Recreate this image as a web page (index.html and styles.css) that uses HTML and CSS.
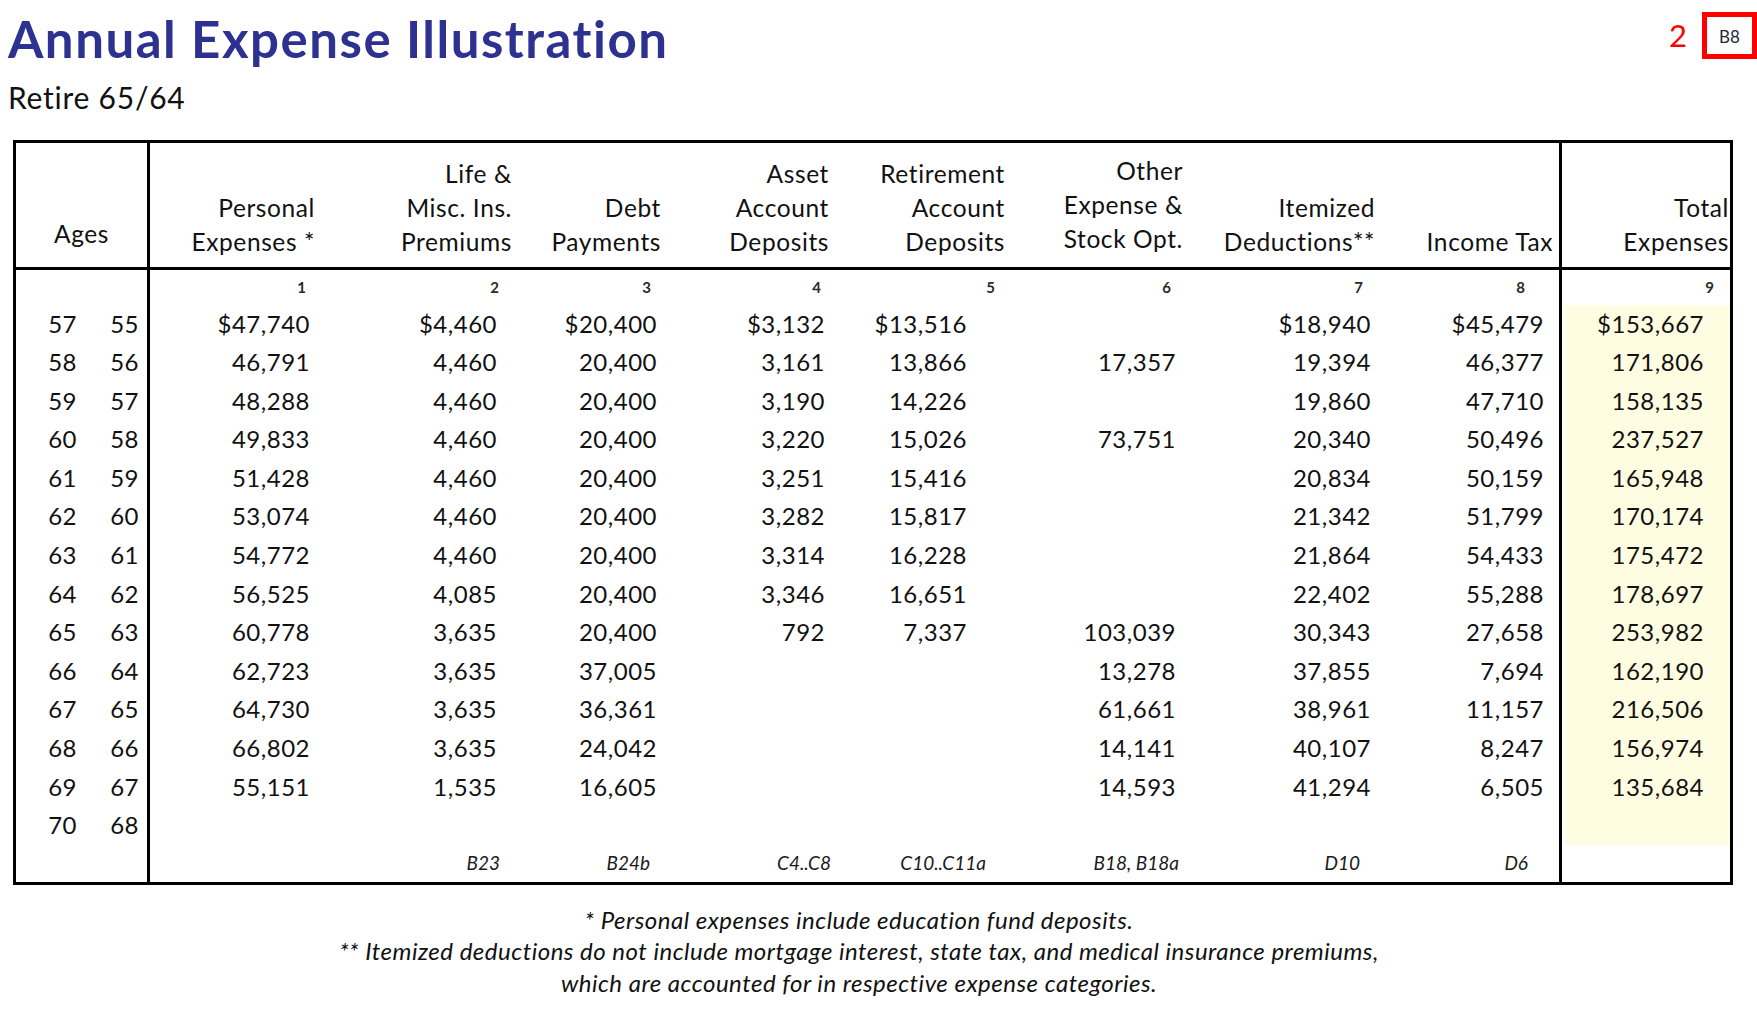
FILE: index.html
```html
<!DOCTYPE html>
<html lang="en">
<head>
<meta charset="utf-8">
<title>Annual Expense Illustration</title>
<link rel="stylesheet" href="styles.css">
</head>
<body>
<div class="top">
  <div class="titles">
    <h1 class="title">Annual Expense Illustration</h1>
    <div class="subtitle">Retire 65/64</div>
  </div>
  <div class="pageref">
    <span class="pagenum">2</span>
    <span class="refbox">B8</span>
  </div>
</div>

<div class="sheet">
  <div class="row hdr">
    <div class="cell ages-h">Ages</div>
    <div class="cell">Personal<br>Expenses *</div>
    <div class="cell">Life &amp;<br>Misc. Ins.<br>Premiums</div>
    <div class="cell">Debt<br>Payments</div>
    <div class="cell">Asset<br>Account<br>Deposits</div>
    <div class="cell">Retirement<br>Account<br>Deposits</div>
    <div class="cell other-h">Other<br>Expense &amp;<br>Stock Opt.</div>
    <div class="cell">Itemized<br>Deductions**</div>
    <div class="cell">Income Tax</div>
    <div class="cell">Total<br>Expenses</div>
  </div>
  <div class="row idx">
    <div class="cell"></div>
    <div class="cell">1</div><div class="cell">2</div><div class="cell">3</div><div class="cell">4</div><div class="cell">5</div><div class="cell">6</div><div class="cell">7</div><div class="cell">8</div><div class="cell">9</div>
  </div>
  <div class="row data">
    <div class="cell ages"><span class="a1">57</span><span class="a2">55</span></div>
    <div class="cell">$47,740</div><div class="cell">$4,460</div><div class="cell">$20,400</div><div class="cell">$3,132</div><div class="cell">$13,516</div><div class="cell"></div><div class="cell">$18,940</div><div class="cell">$45,479</div><div class="cell">$153,667</div>
  </div>
  <div class="row data">
    <div class="cell ages"><span class="a1">58</span><span class="a2">56</span></div>
    <div class="cell">46,791</div><div class="cell">4,460</div><div class="cell">20,400</div><div class="cell">3,161</div><div class="cell">13,866</div><div class="cell">17,357</div><div class="cell">19,394</div><div class="cell">46,377</div><div class="cell">171,806</div>
  </div>
  <div class="row data">
    <div class="cell ages"><span class="a1">59</span><span class="a2">57</span></div>
    <div class="cell">48,288</div><div class="cell">4,460</div><div class="cell">20,400</div><div class="cell">3,190</div><div class="cell">14,226</div><div class="cell"></div><div class="cell">19,860</div><div class="cell">47,710</div><div class="cell">158,135</div>
  </div>
  <div class="row data">
    <div class="cell ages"><span class="a1">60</span><span class="a2">58</span></div>
    <div class="cell">49,833</div><div class="cell">4,460</div><div class="cell">20,400</div><div class="cell">3,220</div><div class="cell">15,026</div><div class="cell">73,751</div><div class="cell">20,340</div><div class="cell">50,496</div><div class="cell">237,527</div>
  </div>
  <div class="row data">
    <div class="cell ages"><span class="a1">61</span><span class="a2">59</span></div>
    <div class="cell">51,428</div><div class="cell">4,460</div><div class="cell">20,400</div><div class="cell">3,251</div><div class="cell">15,416</div><div class="cell"></div><div class="cell">20,834</div><div class="cell">50,159</div><div class="cell">165,948</div>
  </div>
  <div class="row data">
    <div class="cell ages"><span class="a1">62</span><span class="a2">60</span></div>
    <div class="cell">53,074</div><div class="cell">4,460</div><div class="cell">20,400</div><div class="cell">3,282</div><div class="cell">15,817</div><div class="cell"></div><div class="cell">21,342</div><div class="cell">51,799</div><div class="cell">170,174</div>
  </div>
  <div class="row data">
    <div class="cell ages"><span class="a1">63</span><span class="a2">61</span></div>
    <div class="cell">54,772</div><div class="cell">4,460</div><div class="cell">20,400</div><div class="cell">3,314</div><div class="cell">16,228</div><div class="cell"></div><div class="cell">21,864</div><div class="cell">54,433</div><div class="cell">175,472</div>
  </div>
  <div class="row data">
    <div class="cell ages"><span class="a1">64</span><span class="a2">62</span></div>
    <div class="cell">56,525</div><div class="cell">4,085</div><div class="cell">20,400</div><div class="cell">3,346</div><div class="cell">16,651</div><div class="cell"></div><div class="cell">22,402</div><div class="cell">55,288</div><div class="cell">178,697</div>
  </div>
  <div class="row data">
    <div class="cell ages"><span class="a1">65</span><span class="a2">63</span></div>
    <div class="cell">60,778</div><div class="cell">3,635</div><div class="cell">20,400</div><div class="cell">792</div><div class="cell">7,337</div><div class="cell">103,039</div><div class="cell">30,343</div><div class="cell">27,658</div><div class="cell">253,982</div>
  </div>
  <div class="row data">
    <div class="cell ages"><span class="a1">66</span><span class="a2">64</span></div>
    <div class="cell">62,723</div><div class="cell">3,635</div><div class="cell">37,005</div><div class="cell"></div><div class="cell"></div><div class="cell">13,278</div><div class="cell">37,855</div><div class="cell">7,694</div><div class="cell">162,190</div>
  </div>
  <div class="row data">
    <div class="cell ages"><span class="a1">67</span><span class="a2">65</span></div>
    <div class="cell">64,730</div><div class="cell">3,635</div><div class="cell">36,361</div><div class="cell"></div><div class="cell"></div><div class="cell">61,661</div><div class="cell">38,961</div><div class="cell">11,157</div><div class="cell">216,506</div>
  </div>
  <div class="row data">
    <div class="cell ages"><span class="a1">68</span><span class="a2">66</span></div>
    <div class="cell">66,802</div><div class="cell">3,635</div><div class="cell">24,042</div><div class="cell"></div><div class="cell"></div><div class="cell">14,141</div><div class="cell">40,107</div><div class="cell">8,247</div><div class="cell">156,974</div>
  </div>
  <div class="row data">
    <div class="cell ages"><span class="a1">69</span><span class="a2">67</span></div>
    <div class="cell">55,151</div><div class="cell">1,535</div><div class="cell">16,605</div><div class="cell"></div><div class="cell"></div><div class="cell">14,593</div><div class="cell">41,294</div><div class="cell">6,505</div><div class="cell">135,684</div>
  </div>
  <div class="row data">
    <div class="cell ages"><span class="a1">70</span><span class="a2">68</span></div>
    <div class="cell"></div><div class="cell"></div><div class="cell"></div><div class="cell"></div><div class="cell"></div><div class="cell"></div><div class="cell"></div><div class="cell"></div><div class="cell"></div>
  </div>
  <div class="row refs">
    <div class="cell"></div>
    <div class="cell"></div><div class="cell">B23</div><div class="cell">B24b</div><div class="cell">C4..C8</div><div class="cell">C10..C11a</div><div class="cell">B18, B18a</div><div class="cell">D10</div><div class="cell">D6</div><div class="cell"></div>
  </div>
</div>

<div class="notes">
  <p>* Personal expenses include education fund deposits.</p>
  <p>** Itemized deductions do not include mortgage interest, state tax, and medical insurance premiums,</p>
  <p>which are accounted for in respective expense categories.</p>
</div>
</body>
</html>
```

FILE: styles.css
```css
html, body {
  margin: 0;
  padding: 0;
  background: #ffffff;
}

body {
  font-family: Lato, "Open Sans", sans-serif;
  color: #111111;
  width: 1757px;
}

.top {
  display: flex;
  justify-content: space-between;
  align-items: flex-start;
}

.titles {
  padding-left: 8px;
}

.title {
  margin: 9px 0 0 0;
  font-size: 51px;
  line-height: 60px;
  font-weight: 700;
  letter-spacing: 1.5px;
  color: #2d3190;
}

.subtitle {
  margin-top: 8px;
  font-size: 30px;
  line-height: 40px;
  letter-spacing: 0.75px;
  color: #111111;
}

.pageref {
  display: flex;
  align-items: center;
  margin-top: 12px;
  gap: 15px;
}

.pagenum {
  color: #ff0000;
  font-size: 31px;
  line-height: 47px;
}

.refbox {
  box-sizing: border-box;
  width: 55px;
  height: 47px;
  border: 5px solid #ff0000;
  display: flex;
  align-items: center;
  justify-content: center;
  font-size: 17px;
  color: #1e2a3a;
  padding-top: 2px;
}

.sheet {
  box-sizing: border-box;
  margin: 23px 0 0 13px;
  width: 1720px;
  border: 3px solid #000000;
  display: grid;
  grid-template-columns: 134px 169px 197px 149px 168px 176px 178px 192px 183px 168px;
  grid-template-rows: 127px 34.5px repeat(14, 38.6px) 36.8px;
}

.row {
  display: contents;
}

.cell {
  box-sizing: border-box;
  text-align: right;
  white-space: nowrap;
}

/* column offsets: header / numbers / index / refs */
.row > :nth-child(1) { border-right: 3px solid #000000; }
.row > :nth-child(2) { --h: 4px; --n: 9px; --i: 13px; --r: 0px; }
.row > :nth-child(3) { --h: 4px; --n: 19px; --i: 17px; --r: 16px; }
.row > :nth-child(4) { --h: 4px; --n: 8px; --i: 14px; --r: 15px; }
.row > :nth-child(5) { --h: 4px; --n: 8px; --i: 12px; --r: 2px; }
.row > :nth-child(6) { --h: 4px; --n: 42px; --i: 14px; --r: 23px; }
.row > :nth-child(7) { --h: 4px; --n: 11px; --i: 16px; --r: 8px; }
.row > :nth-child(8) { --h: 4px; --n: 8px; --i: 16px; --r: 19px; }
.row > :nth-child(9) { --h: 6px; --n: 15px; --i: 34px; --r: 31px; border-right: 3px solid #000000; }
.row > :nth-child(10) { --h: 1px; --n: 26px; --i: 16px; --r: 0px; }

.hdr > .cell {
  border-bottom: 3px solid #000000;
  display: flex;
  flex-direction: column;
  justify-content: flex-end;
  align-items: flex-end;
  padding-right: var(--h);
  padding-bottom: 8px;
  font-size: 24.5px;
  line-height: 34px;
  letter-spacing: 0.6px;
  color: #111111;
}

.hdr > .ages-h {
  align-items: center;
  padding-right: 0;
  padding-bottom: 16px;
}

.hdr > .other-h {
  padding-bottom: 11px;
}

.idx > .cell {
  padding-right: var(--i);
  font-size: 15px;
  line-height: 34.5px;
  font-weight: 700;
  color: #2a2a2a;
}

.data > .cell {
  padding-right: var(--n);
  font-size: 24px;
  line-height: 38.6px;
  letter-spacing: 0.5px;
  color: #111111;
}

.data > .cell:nth-child(10) {
  margin-left: 3px;
  background: #fffde1;
}

.data > .ages {
  display: flex;
  padding-right: 0;
}

.a1 {
  width: 61px;
  text-align: right;
}

.a2 {
  width: 62px;
  text-align: right;
}

.refs > .cell {
  padding-right: var(--r);
  font-size: 19px;
  line-height: 36.8px;
  font-style: italic;
  color: #1a1a1a;
}

.notes {
  padding-right: 39px;
  margin-top: 19px;
  text-align: center;
  font-style: italic;
  font-size: 24px;
  line-height: 31.5px;
  letter-spacing: 0.5px;
  color: #111111;
}

.notes p {
  margin: 0;
}
```
